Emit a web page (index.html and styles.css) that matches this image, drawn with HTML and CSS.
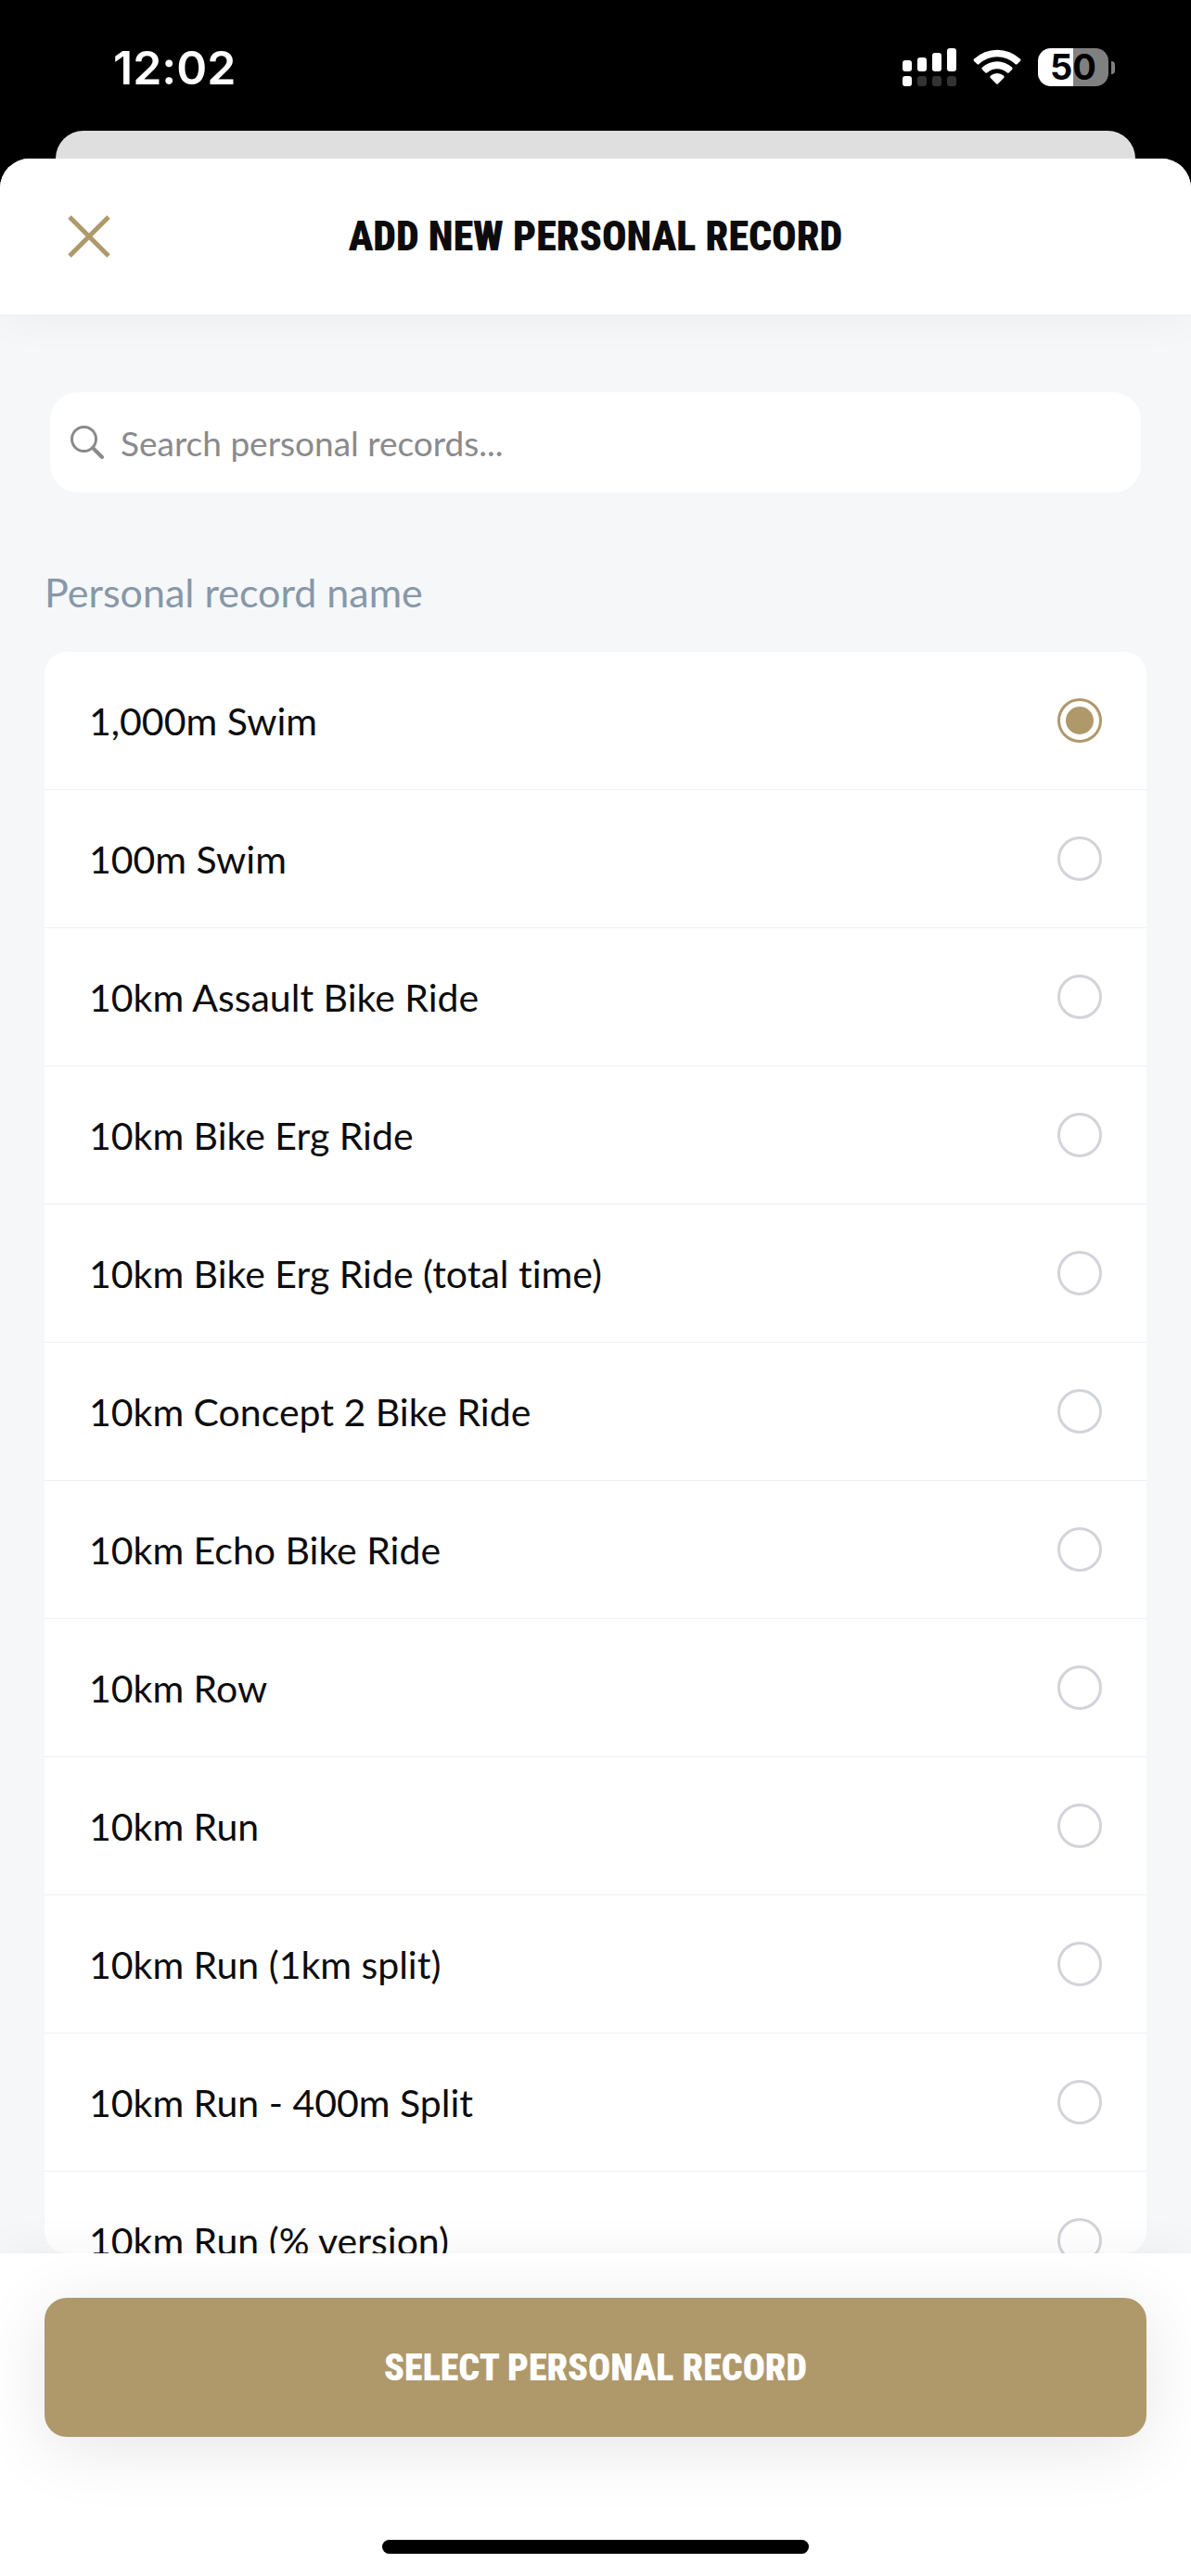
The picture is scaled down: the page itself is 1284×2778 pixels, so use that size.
FILE: index.html
```html
<!DOCTYPE html>
<html lang="en">
<head>
<meta charset="utf-8">
<meta name="viewport" content="width=device-width, initial-scale=1">
<title>Add new personal record</title>
<link rel="stylesheet" href="styles.css">
</head>
<body>
<div class="status-bar">
  <time class="clock">12:02</time>
  <div class="status-icons">
    <svg class="signal" width="58" height="42" viewBox="0 0 58 42" aria-hidden="true">
      <g fill="#fff"><rect x="0" y="13" width="10" height="12" rx="3"/><rect x="16" y="10" width="10" height="15" rx="3"/><rect x="32" y="5" width="10" height="20" rx="3"/><rect x="48" y="0" width="10" height="25" rx="3"/><rect x="0" y="30" width="10" height="11" rx="3"/></g>
      <g fill="#333"><rect x="16" y="30" width="10" height="11" rx="3"/><rect x="32" y="30" width="10" height="11" rx="3"/><rect x="48" y="30" width="10" height="11" rx="3"/></g>
    </svg>
    <svg class="wifi" width="52" height="42" viewBox="0 0 52 42" aria-hidden="true">
      <g fill="#fff">
        <path d="M1.2 11.6a36 36 0 0 1 49.6 0q1.2 1.1.1 2.3l-3.2 3.2q-1.100 1-2.300 0a28 28 0 0 0-38.800 0q-1.200 1-2.300 0L1.100 13.900q-1.100-1.200.1-2.300z"/>
        <path d="M10 20.600a23.500 23.500 0 0 1 32 0q1.300 1.200.1 2.300l-3.300 3.300q-1.100 1-2.300.1a15.500 15.500 0 0 0-21 0q-1.200.9-2.300-.1l-3.300-3.300q-1.200-1.100.1-2.300z"/>
        <path d="M19 29.600a11 11 0 0 1 14 0q1.400 1.100.2 2.400l-6.200 6.300q-1 1-2 0L18.800 32q-1.200-1.300.2-2.400z"/>
      </g>
    </svg>
    <div class="battery"><span class="battery-level">50</span><span class="battery-tip"></span></div>
  </div>
</div>
<div class="sheet-behind"></div>
<div class="sheet">
  <header class="sheet-header">
    <button class="close" type="button" aria-label="Close">
      <svg width="46" height="46" viewBox="0 0 46 46" aria-hidden="true"><path d="M2 2L44 44M44 2L2 44" stroke="#af996b" stroke-width="5" fill="none"/></svg>
    </button>
    <h1 class="title">ADD NEW PERSONAL RECORD</h1>
  </header>
  <main class="content">
    <label class="search">
      <svg width="36" height="36" viewBox="0 0 36 36" aria-hidden="true"><g fill="none" stroke="#8a8a8c" stroke-width="3" stroke-linecap="round"><circle cx="14.500" cy="14.500" r="13"/><path d="M24 24L34 34" stroke-width="4"/></g></svg>
      <input class="search-input" type="search" placeholder="Search personal records..." aria-label="Search personal records">
    </label>
    <h2 class="group-name" id="group-name">Personal record name</h2>
    <div class="records" role="radiogroup" aria-labelledby="group-name">
      <label class="record">1,000m Swim<input type="radio" name="record" checked></label>
      <label class="record">100m Swim<input type="radio" name="record"></label>
      <label class="record">10km Assault Bike Ride<input type="radio" name="record"></label>
      <label class="record">10km Bike Erg Ride<input type="radio" name="record"></label>
      <label class="record">10km Bike Erg Ride (total time)<input type="radio" name="record"></label>
      <label class="record">10km Concept 2 Bike Ride<input type="radio" name="record"></label>
      <label class="record">10km Echo Bike Ride<input type="radio" name="record"></label>
      <label class="record">10km Row<input type="radio" name="record"></label>
      <label class="record">10km Run<input type="radio" name="record"></label>
      <label class="record">10km Run (1km split)<input type="radio" name="record"></label>
      <label class="record">10km Run - 400m Split<input type="radio" name="record"></label>
      <label class="record">10km Run (% version)<input type="radio" name="record"></label>
    </div>
  </main>
  <footer class="sheet-footer">
    <button class="select" type="button">SELECT PERSONAL RECORD</button>
    <div class="home-indicator"></div>
  </footer>
</div>
</body>
</html>
```

FILE: styles.css
```css
* {
  box-sizing: border-box;
}

:root {
  --gold: #af996b;
  --text-font: Lato, "Open Sans", sans-serif;
  --heading-font: "Roboto Condensed", "Liberation Sans Narrow", Roboto, sans-serif;
}

body {
  margin: 0;
  height: 100vh;
  display: flex;
  flex-direction: column;
  background: #000;
  color: #0c0c0e;
  font-family: var(--text-font);
  font-size: 41px;
  font-variant-ligatures: none;
}

.status-bar {
  display: flex;
  justify-content: space-between;
  flex: none;
  height: 141px;
  padding: 52px 82px 0 122px;
  color: #fff;
  font-family: Inter, sans-serif;
}

.clock {
  font-size: 50px;
  font-weight: 600;
  line-height: 42px;
}

.status-icons {
  display: flex;
  gap: 18px;
}

.battery {
  display: flex;
  align-items: center;
  gap: 3px;
  height: 41px;
}

.battery-level {
  width: 76px;
  border-radius: 14px;
  background: linear-gradient(90deg, #fff 50%, #808080 50%);
  color: #000;
  font-size: 38px;
  font-weight: 700;
  line-height: 41px;
  text-align: center;
}

.battery-tip {
  width: 4px;
  height: 14px;
  border-radius: 0 8px 8px 0;
  background: #808080;
}

.sheet-behind {
  flex: none;
  height: 30px;
  margin: 0 60px;
  border-radius: 30px 30px 0 0;
  background: #dfdfdf;
}

.sheet {
  display: flex;
  flex: 1;
  flex-direction: column;
  min-height: 0;
  overflow: hidden;
  border-radius: 32px 32px 0 0;
  background: #f5f7f9;
}

.sheet-header {
  display: grid;
  grid-template-columns: 46px 1fr 46px;
  align-items: center;
  flex: none;
  z-index: 1;
  height: 168px;
  padding: 0 73px;
  background: #fff;
  box-shadow: 0 0 48px rgba(0, 0, 0, 0.05);
}

.close {
  display: block;
  height: 46px;
  padding: 0;
  border: 0;
  background: none;
}

.close svg {
  display: block;
}

.title {
  margin: 0;
  font-family: var(--heading-font);
  font-size: 44px;
  font-weight: 900;
  text-align: center;
}

.content {
  display: flex;
  flex: 1;
  flex-direction: column;
  min-height: 0;
  padding: 84px 48px 0;
}

.search {
  display: flex;
  align-items: center;
  flex: none;
  gap: 18px;
  height: 108px;
  margin: 0 6px;
  padding: 0 22px;
  border-radius: 30px;
  background: #fff;
}

.search-input {
  flex: 1;
  min-width: 0;
  padding: 0;
  border: 0;
  outline: 0;
  background: none;
  color: inherit;
  font: inherit;
  font-size: 37px;
}

.search-input::placeholder {
  color: #8a8a8c;
}

.group-name {
  flex: none;
  margin: 84px 0 40px;
  color: #8798a8;
  font-size: 43px;
  font-weight: 400;
  line-height: 48px;
}

.records {
  flex: 1;
  min-height: 0;
  overflow: hidden;
  border-radius: 24px;
  background: #fff;
}

.record {
  display: flex;
  align-items: center;
  justify-content: space-between;
  height: 149px;
  padding: 0 48px;
  border-bottom: 1px solid #edf0f1;
}

.record input {
  appearance: none;
  width: 48px;
  height: 48px;
  margin: 0;
  border: 3px solid #d3d4da;
  border-radius: 50%;
}

.record input:checked {
  padding: 6px;
  border-color: var(--gold);
  background: var(--gold) content-box;
}

.sheet-footer {
  flex: none;
  z-index: 1;
  padding: 48px 48px 24px;
  background: #fff;
  box-shadow: 0 0 48px rgba(0, 0, 0, 0.05);
}

.select {
  display: block;
  width: 100%;
  height: 150px;
  border: 0;
  border-radius: 24px;
  background: var(--gold);
  box-shadow: 0 12px 72px rgba(0, 0, 0, 0.1);
  color: #fff;
  font-family: var(--heading-font);
  font-size: 40px;
  font-weight: 900;
}

.home-indicator {
  width: 460px;
  height: 15px;
  margin: 111px auto 0;
  border-radius: 8px;
  background: #000;
}
```
